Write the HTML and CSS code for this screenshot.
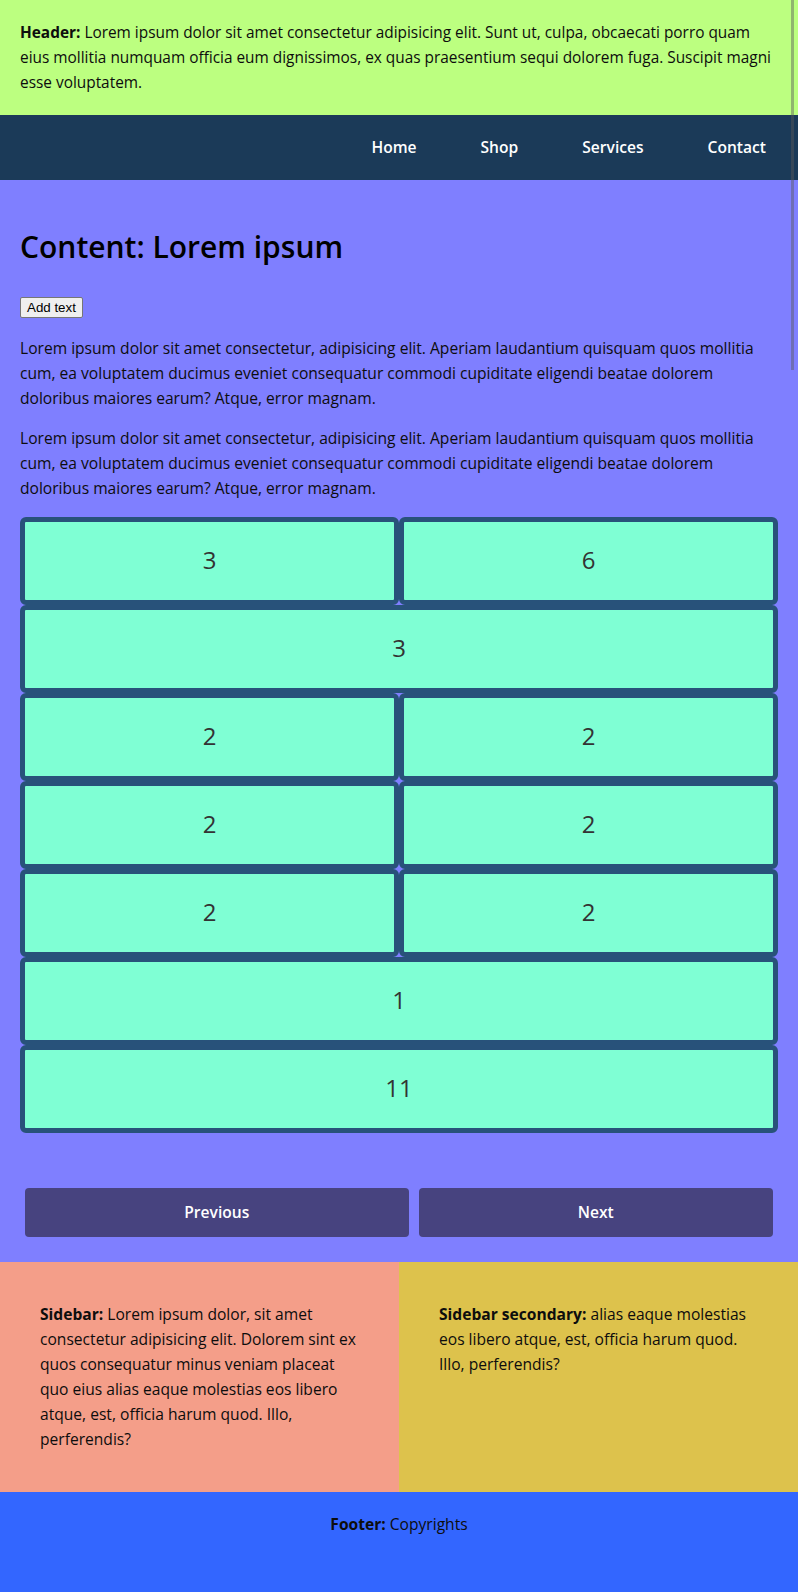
FILE: index.html
```html
<!DOCTYPE html>
<html lang="en">
<head>
<meta charset="utf-8">
<title>Layout</title>
<link rel="stylesheet" href="styles.css">
</head>
<body>
<div class="page">
  <header class="header">
    <p><strong>Header:</strong> Lorem ipsum dolor sit amet consectetur adipisicing elit. Sunt ut, culpa, obcaecati porro quam eius mollitia numquam officia eum dignissimos, ex quas praesentium sequi dolorem fuga. Suscipit magni esse voluptatem.</p>
  </header>
  <nav class="nav">
    <ul class="nav-list">
      <li><a class="nav-link" href="#">Home</a></li>
      <li><a class="nav-link" href="#">Shop</a></li>
      <li><a class="nav-link" href="#">Services</a></li>
      <li><a class="nav-link" href="#">Contact</a></li>
    </ul>
  </nav>
  <main class="content">
    <h1 class="title">Content: Lorem ipsum</h1>
    <div class="actions"><button class="add-btn" type="button">Add text</button></div>
    <p class="text">Lorem ipsum dolor sit amet consectetur, adipisicing elit. Aperiam laudantium quisquam quos mollitia cum, ea voluptatem ducimus eveniet consequatur commodi cupiditate eligendi beatae dolorem doloribus maiores earum? Atque, error magnam.</p>
    <p class="text">Lorem ipsum dolor sit amet consectetur, adipisicing elit. Aperiam laudantium quisquam quos mollitia cum, ea voluptatem ducimus eveniet consequatur commodi cupiditate eligendi beatae dolorem doloribus maiores earum? Atque, error magnam.</p>
    <div class="grid">
      <div class="cell">3</div>
      <div class="cell">6</div>
      <div class="cell wide">3</div>
      <div class="cell">2</div>
      <div class="cell">2</div>
      <div class="cell">2</div>
      <div class="cell">2</div>
      <div class="cell">2</div>
      <div class="cell">2</div>
      <div class="cell wide">1</div>
      <div class="cell wide">11</div>
    </div>
    <div class="pager">
      <a class="pager-btn" href="#">Previous</a>
      <a class="pager-btn" href="#">Next</a>
    </div>
  </main>
  <div class="sidebars">
    <aside class="sidebar sidebar-primary">
      <p><strong>Sidebar:</strong> Lorem ipsum dolor, sit amet consectetur adipisicing elit. Dolorem sint ex quos consequatur minus veniam placeat quo eius alias eaque molestias eos libero atque, est, officia harum quod. Illo, perferendis?</p>
    </aside>
    <aside class="sidebar sidebar-secondary">
      <p><strong>Sidebar secondary:</strong> alias eaque molestias eos libero atque, est, officia harum quod. Illo, perferendis?</p>
    </aside>
  </div>
  <footer class="footer">
    <p><strong>Footer:</strong> Copyrights</p>
  </footer>
  <div class="scroll-thumb"></div>
</div>
</body>
</html>
```

FILE: styles.css
```css
* {
  box-sizing: border-box;
}

html, body {
  margin: 0;
  padding: 0;
}

body {
  font-family: "Open Sans", "Noto Sans", sans-serif;
  font-size: 15.6px;
  line-height: 25px;
  color: #0d0d0d;
  background: #3366ff;
}

p {
  margin: 0;
}

strong {
  font-weight: 700;
}

.page {
  width: 798px;
}

.header {
  background: #bcff80;
  padding: 20px 20px;
  font-size: 15.4px;
}

.nav {
  background: #1b3a58;
  height: 65px;
}

.nav-list {
  list-style: none;
  margin: 0;
  padding: 0;
  height: 100%;
  display: flex;
  justify-content: flex-end;
  align-items: center;
}

.nav-link {
  display: block;
  padding: 0 32px;
  color: #fff;
  text-decoration: none;
  font-weight: 600;
}

.content {
  background: #7f7fff;
  padding: 20px 20px 20px;
}

.title {
  margin: 27px 0 0;
  font-size: 30px;
  line-height: 40px;
  font-weight: 600;
  color: #000;
}

.actions {
  display: flex;
  margin-top: 30px;
  margin-bottom: 18px;
}

.add-btn {
  font-family: "Liberation Sans", Arial, sans-serif;
  font-size: 13.333px;
  line-height: normal;
  padding: 1px 6px;
  height: 21px;
  color: #000;
  background: #efefef;
  border: 1px solid #767676;
  border-radius: 2px;
}

.text {
  margin: 15px 0;
}

.grid {
  margin-top: 16px;
  display: grid;
  grid-template-columns: 1fr 1fr;
  grid-auto-rows: 88px;
}

.cell {
  background: #7fffd4;
  border: 5px solid #28527a;
  border-radius: 6px;
  padding-bottom: 4px;
  display: flex;
  align-items: center;
  justify-content: center;
  font-family: "Open Sans", sans-serif;
  font-size: 24px;
  color: #333;
}

.cell.wide {
  grid-column: span 2;
}

.pager {
  display: flex;
  margin-top: 50px;
}

.pager-btn {
  flex: 1 1 auto;
  margin: 5px;
  height: 49px;
  display: flex;
  align-items: center;
  justify-content: center;
  background: #47437f;
  color: #fff;
  text-decoration: none;
  border-radius: 4px;
  font-weight: 600;
}

.sidebars {
  display: grid;
  grid-template-columns: 399px 399px;
}

.sidebar {
  padding: 40px;
}

.sidebar-primary {
  background: #f49e89;
}

.sidebar-secondary {
  background: #ddc24c;
}

.footer {
  height: 100px;
  padding: 20px;
  text-align: center;
  background: #3366ff;
}

.scroll-thumb {
  position: fixed;
  top: 0;
  right: 4px;
  width: 3px;
  height: 370px;
  background: rgba(90, 90, 90, 0.45);
}
```
